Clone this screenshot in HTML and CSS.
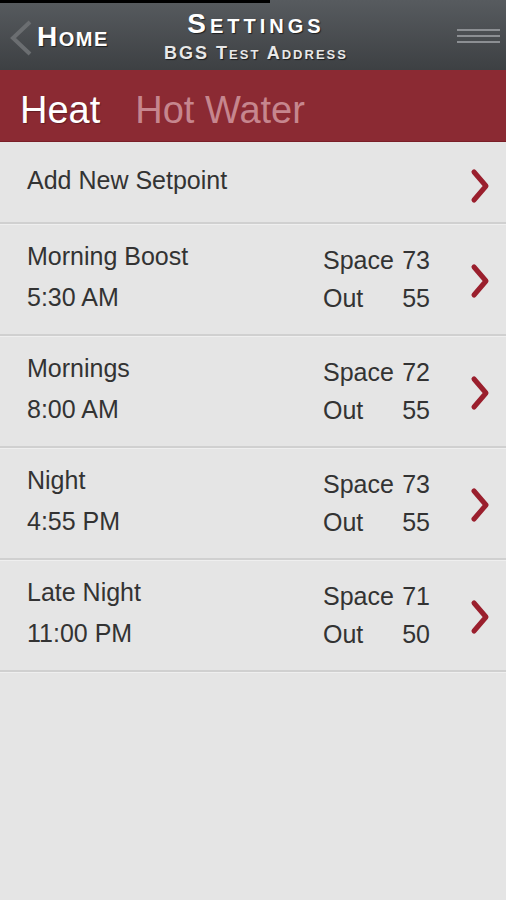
FILE: index.html
```html
<!DOCTYPE html>
<html lang="en">
<head>
  <meta charset="UTF-8" />
  <meta name="viewport" content="width=device-width, initial-scale=1.0" />
  <title>Settings</title>
  <link rel="stylesheet" href="styles.css">
</head>
<body>
  <!-- Status bar remnant -->
  <div class="status-strip"></div>

  <!-- Top Navigation Bar -->
  <header class="nav-bar">
    <a class="back-link" href="#">
      <svg class="back-icon" width="26" height="38" viewBox="0 0 26 38">
        <polyline points="22,3 5,19 22,35" fill="none" stroke="#6b6e71" stroke-width="4" />
      </svg>
      <span class="back-text">Home</span>
    </a>
    <div class="nav-title">
      <div class="title-main">Settings</div>
      <div class="title-sub">BGS Test Address</div>
    </div>
    <div class="menu-icon">
      <span></span>
      <span></span>
      <span></span>
    </div>
  </header>

  <!-- Tabs -->
  <nav class="tab-bar">
    <span class="tab active">Heat</span>
    <span class="tab">Hot Water</span>
  </nav>

  <!-- Setpoint List -->
  <div class="setpoint-list">
    <div class="row row-add">
      <div class="row-main">
        <div class="row-title">Add New Setpoint</div>
      </div>
      <svg class="chevron" width="20" height="36" viewBox="0 0 20 36">
        <polyline points="4,4 16,18 4,32" fill="none" stroke="#9a1f2d" stroke-width="5" stroke-linecap="round" stroke-linejoin="round" />
      </svg>
    </div>

    <div class="row">
      <div class="row-main">
        <div class="row-title">Morning Boost</div>
        <div class="row-time">5:30 AM</div>
      </div>
      <div class="temps">
        <span>Space</span><span>73</span>
        <span>Out</span><span>55</span>
      </div>
      <svg class="chevron" width="20" height="36" viewBox="0 0 20 36">
        <polyline points="4,4 16,18 4,32" fill="none" stroke="#9a1f2d" stroke-width="5" stroke-linecap="round" stroke-linejoin="round" />
      </svg>
    </div>

    <div class="row">
      <div class="row-main">
        <div class="row-title">Mornings</div>
        <div class="row-time">8:00 AM</div>
      </div>
      <div class="temps">
        <span>Space</span><span>72</span>
        <span>Out</span><span>55</span>
      </div>
      <svg class="chevron" width="20" height="36" viewBox="0 0 20 36">
        <polyline points="4,4 16,18 4,32" fill="none" stroke="#9a1f2d" stroke-width="5" stroke-linecap="round" stroke-linejoin="round" />
      </svg>
    </div>

    <div class="row">
      <div class="row-main">
        <div class="row-title">Night</div>
        <div class="row-time">4:55 PM</div>
      </div>
      <div class="temps">
        <span>Space</span><span>73</span>
        <span>Out</span><span>55</span>
      </div>
      <svg class="chevron" width="20" height="36" viewBox="0 0 20 36">
        <polyline points="4,4 16,18 4,32" fill="none" stroke="#9a1f2d" stroke-width="5" stroke-linecap="round" stroke-linejoin="round" />
      </svg>
    </div>

    <div class="row">
      <div class="row-main">
        <div class="row-title">Late Night</div>
        <div class="row-time">11:00 PM</div>
      </div>
      <div class="temps">
        <span>Space</span><span>71</span>
        <span>Out</span><span>50</span>
      </div>
      <svg class="chevron" width="20" height="36" viewBox="0 0 20 36">
        <polyline points="4,4 16,18 4,32" fill="none" stroke="#9a1f2d" stroke-width="5" stroke-linecap="round" stroke-linejoin="round" />
      </svg>
    </div>
  </div>
</body>
</html>
```

FILE: styles.css
```css
/* Global styles */
body {
  margin: 0;
  background: #e5e5e5;
  color: #333;
  font-family: "Liberation Sans", Arial, sans-serif;
  position: relative;
  min-height: 900px;
}
.status-strip {
  position: absolute;
  top: 0;
  left: 0;
  width: 270px;
  height: 3px;
  background: #000;
  z-index: 5;
}
/* Navigation bar */
.nav-bar {
  height: 70px;
  display: grid;
  grid-template-columns: 1fr auto 1fr;
  align-items: center;
  background: linear-gradient(#575b5f, #3d4043);
  color: white;
}
.back-link {
  display: flex;
  align-items: center;
  gap: 3px;
  padding-left: 8px;
  color: white;
  text-decoration: none;
}
.back-icon {
  display: block;
  margin-top: 6px;
}
.back-text {
  font-size: 28px;
  font-weight: bold;
  font-variant: small-caps;
  letter-spacing: 1.5px;
  text-shadow: 1px 1px 1px rgba(0,0,0,0.6);
  padding-top: 4px;
}
.nav-title {
  text-align: center;
  font-weight: bold;
  font-variant: small-caps;
  text-shadow: 1px 1px 1px rgba(0,0,0,0.6);
  padding-left: 6px;
  padding-top: 6px;
}
.title-main {
  font-size: 28px;
  letter-spacing: 4px;
  line-height: 30px;
}
.title-sub {
  font-size: 18px;
  letter-spacing: 2px;
  line-height: 28px;
  color: #e8e8e8;
}
.menu-icon {
  justify-self: end;
  display: flex;
  flex-direction: column;
  gap: 4px;
  width: 43px;
  margin-right: 6px;
  margin-top: 2px;
}
.menu-icon span {
  height: 2px;
  background: #8c8f93;
}
/* Tabs */
.tab-bar {
  height: 71px;
  display: flex;
  align-items: center;
  gap: 35px;
  padding-left: 20px;
  background: #8b2a33;
  border-bottom: 1px solid #7a1f27;
  font-size: 38px;
}
.tab {
  color: #c6868e;
  padding-top: 10px;
}
.tab.active {
  color: white;
  text-shadow: 1px 1px 1px rgba(0,0,0,0.3);
}
/* Setpoint list */
.row {
  height: 110px;
  display: flex;
  align-items: center;
  padding: 0 16px 0 27px;
  border-bottom: 2px solid #d0d0d0;
  box-shadow: 0 1px 0 #efefef;
  font-size: 25px;
}
.row-add {
  height: 80px;
}
.row-add .chevron {
  margin-top: 8px;
}
.row-main {
  flex: 1;
  margin-top: -4px;
}
.row-time {
  margin-top: 12px;
}
.temps {
  display: grid;
  grid-template-columns: auto auto;
  column-gap: 6px;
  row-gap: 9px;
  width: 107px;
  margin-right: 40px;
}
.temps span:nth-child(even) {
  text-align: right;
}
.chevron {
  display: block;
  margin-top: 4px;
}
```
